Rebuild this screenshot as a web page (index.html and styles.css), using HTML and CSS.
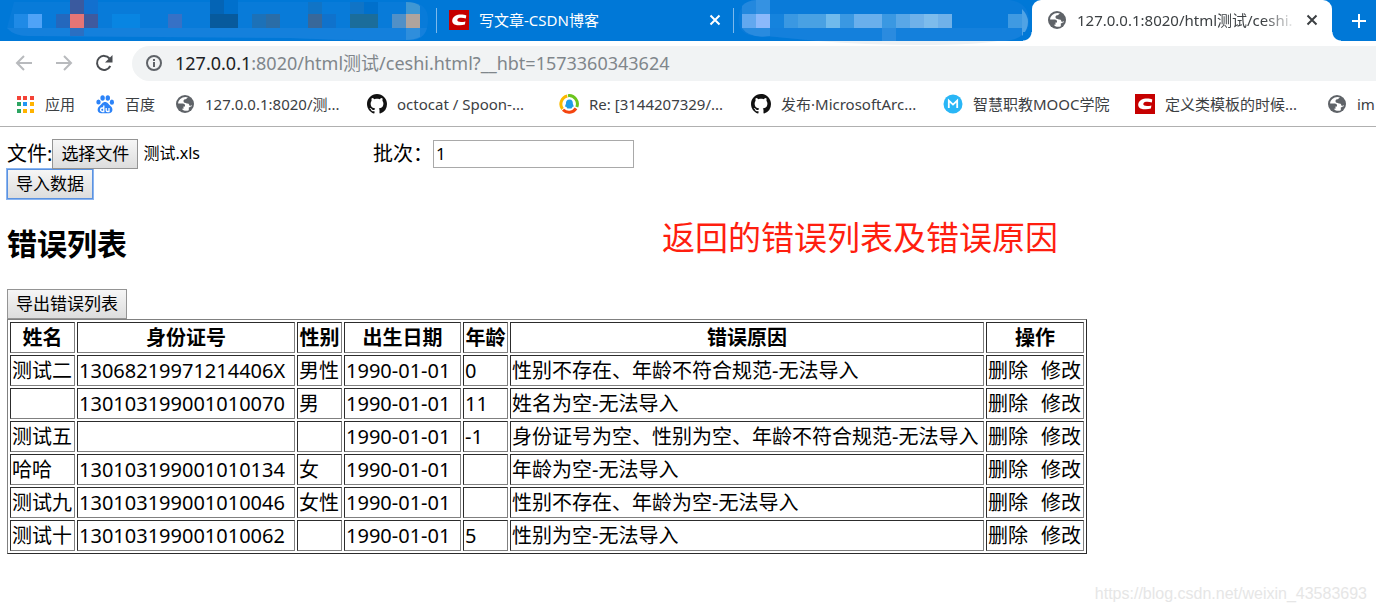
FILE: index.html
```html
<!DOCTYPE html>
<html lang="zh-CN">
<head>
<meta charset="utf-8">
<title>错误列表</title>
<link rel="stylesheet" href="styles.css">
</head>
<body>
<svg class="defs" width="0" height="0" aria-hidden="true">
  <symbol id="globe" viewBox="0 0 20 20">
    <circle cx="10" cy="10" r="9" fill="#5f6368"/>
    <path d="M10.500 3C6.500 3 3.200 6 3.100 9.500h4.700c1.300 0 2.200.9 2.200 2v1H8.500v2.200H6.800c1.800 2.300 5 2.700 7 1.500v-2.700c1-.5 1.800-1.300 2.900-1.300.5-1.500.3-3-.3-4.200h-3.200c-1.200 0-1.200 1-2.500 1-1.500 0-2.200-.9-2.200-2s.9-1.700 2.100-1.700c1 0 1-1.200 2.400-1.700z" fill="#fff"/>
    <path d="M13 4.500c2.500 1 4.500 3 4.700 6.500l-2.900 1-1.200-2.200-2.600-.6V8l2-1z" fill="#5f6368"/>
  </symbol>
  <symbol id="github" viewBox="0 0 16 16">
    <path fill="#111" d="M8 0C3.580 0 0 3.580 0 8c0 3.540 2.290 6.530 5.470 7.590.4.070.55-.17.55-.38 0-.19-.01-.82-.01-1.490-2.010.37-2.530-.49-2.690-.94-.09-.23-.48-.94-.82-1.130-.28-.15-.68-.52-.01-.53.63-.01 1.080.58 1.230.82.72 1.210 1.870.87 2.330.66.07-.52.28-.87.51-1.070-1.780-.2-3.640-.89-3.640-3.950 0-.87.31-1.590.82-2.150-.08-.2-.36-1.020.08-2.120 0 0 .67-.21 2.200.82.64-.18 1.320-.27 2-.27s1.360.09 2 .27c1.530-1.040 2.200-.82 2.200-.82.44 1.100.16 1.920.08 2.120.51.56.82 1.270.82 2.150 0 3.070-1.870 3.750-3.650 3.950.29.25.54.73.54 1.480 0 1.070-.01 1.930-.01 2.200 0 .21.15.46.55.38A8.010 8.010 0 0 0 16 8c0-4.420-3.580-8-8-8z"/>
  </symbol>
  <symbol id="csdn" viewBox="0 0 20 20">
    <path fill="#c60000" d="M0 0h20v20H0z"/>
    <path d="M17.300 5.500C14.500 4.200 9.300 4 6 6c-3.600 2.400-3.600 6.800-.5 8.400 3 1.300 7.300 1.200 10.400.2l.5-3.200c-2.300.7-5.400 1-7.200.2-1.500-.8-1-2.800.6-3.500 2-.8 4.700-.4 7 .4z" fill="#fff"/>
  </symbol>
  <symbol id="close" viewBox="0 0 12 12">
    <path d="m1.500 1.500 9 9m0-9-9 9" fill="none" stroke="currentColor" stroke-width="2"/>
  </symbol>
</svg>

<header class="browser">
  <div class="tabs">
    <div class="tab tab-first">
      <svg class="mosaic" width="436" height="41" aria-hidden="true">
        <path d="M14 2H410q18 1 18 18 0 19-18 20-60 1-120-2L28 36Q14 36 7 28z" fill="#087bd9"/>
        <path d="M7 28H427q-3 12-17 12-60 1-120-2L28 36Q14 36 7 28z" fill="#1480dc"/>
        <g>
          <path fill="#3a5a9f" d="M70 0h14v14H70z"/><path fill="#1270cf" d="M84 0h14v14H84z"/>
          <path fill="#0464b5" d="M210 0h14v14h-14z"/><path fill="#0070cc" d="M224 0h14v14h-14zM364 2h14v12h-14z"/>
          <path fill="#1074c6" d="M308 2h14v12h-14zM350 2h14v12h-14z"/><path fill="#3f97d3" d="M406 2q10 0 14 4v8h-14z"/>
          <path fill="#1f8ae6" d="M14 14h14v14H14z"/><path fill="#4fa3f7" d="M28 14h14v14H28z"/>
          <path fill="#2468bd" d="M56 14h14v14H56z"/><path fill="#e67575" d="M70 14h14v14H70z"/>
          <path fill="#3f5a9e" d="M84 14h14v14H84z"/><path fill="#0885e2" d="M112 14h28v14h-28z"/>
          <path fill="#3671c6" d="M168 14h14v14h-14z"/><path fill="#075a9d" d="M210 14h28v14h-28z"/>
          <path fill="#1c71b8" d="M252 14h14v14h-14z"/><path fill="#2a6da7" d="M266 14h14v14h-14z"/>
          <path fill="#38689a" d="M308 14h14v14h-14z"/><path fill="#0f72cc" d="M322 14h14v14h-14z"/>
          <path fill="#1b6d9b" d="M350 14h28v14h-28z"/><path fill="#5190c7" d="M392 14h14v14h-14z"/>
          <path fill="#b0a49d" d="M406 14h14v14h-14z"/><path fill="#2b6fc2" d="M70 28h14v8H70z"/>
          <path fill="#2f8edc" d="M406 28h14v9q-6 3-14 3z"/>
        </g>
      </svg>
    </div>
    <div class="tab tab-middle">
      <svg class="icon" aria-hidden="true"><use href="#csdn"/></svg>
      <span class="tab-title">写文章-CSDN博客</span>
      <button class="tab-close" aria-label="关闭标签页"><svg width="12" height="12"><use href="#close"/></svg></button>
    </div>
    <div class="tab tab-third">
      <svg class="mosaic" width="298" height="46" aria-hidden="true">
        <path d="M84 41H264q-24 4-78 4Q130 45 84 41z" fill="#eef1f4"/>
        <path d="M18 0H276q19 3 19 21 0 19-29 20H84L32 36Q8 38 5 25 2 6 18 0z" fill="#0a7bd9"/>
        <path d="M8 28H293q-5 13-27 13H84L32 36Q15 38 8 28z" fill="#1480dc"/>
        <g>
          <path fill="#2388de" d="M8 6q4-5 14-6v14H8z"/><path fill="#3592e2" d="M22 0h14v14H22z"/>
          <path fill="#62a8ef" d="M8 14h14v14H8z"/><path fill="#8bb9fb" d="M22 14h14v14H22z"/>
          <path fill="#1583dd" d="M36 14h14v14H36z"/><path fill="#3a98e2" d="M50 14h14v14H50zM106 14h14v14h-14zM148 14h14v14h-14z"/>
          <path fill="#49a1e3" d="M64 14h28v14H64z"/><path fill="#70baec" d="M92 14h14v14H92z"/>
          <path fill="#69afec" d="M120 14h28v14h-28z"/><path fill="#59a7e7" d="M162 14h14v14h-14z"/>
          <path fill="#6fb1e9" d="M176 14h42v14h-42z"/><path fill="#7dbcec" d="M190 14h14v14h-14z"/>
          <path fill="#3f9ae2" d="M274 14h14v14h-14z"/><path fill="#4fa3e5" d="M288 9q6 6 6 13t-6 14z"/>
          <path fill="#298bdf" d="M8 28h28v8q-20 3-28-8z"/><path fill="#2b8bdf" d="M148 28h14v13h-14z"/>
        </g>
      </svg>
    </div>
    <div class="tab tab-active">
      <svg class="icon" aria-hidden="true"><use href="#globe"/></svg>
      <span class="tab-title">127.0.0.1:8020/html测试/ceshi.</span>
      <button class="tab-close" aria-label="关闭标签页"><svg width="12" height="12"><use href="#close"/></svg></button>
    </div>
    <button class="new-tab" aria-label="打开新的标签页">
      <svg width="16" height="16" viewBox="0 0 16 16"><path d="M8 1v14M1 8h14" stroke="#fff" stroke-width="2"/></svg>
    </button>
  </div>

  <div class="toolbar">
    <button class="nav" aria-label="后退"><svg width="18" height="18" viewBox="0 0 18 18"><path d="M17 9H2M9 2 2 9l7 7" fill="none" stroke="#b8babd" stroke-width="2"/></svg></button>
    <button class="nav" aria-label="前进"><svg width="18" height="18" viewBox="0 0 18 18"><path d="M1 9h15M9 2l7 7-7 7" fill="none" stroke="#b8babd" stroke-width="2"/></svg></button>
    <button class="nav" aria-label="重新加载"><svg width="18" height="18" viewBox="0 0 18 18"><path d="M15.300 12A7 7 0 1 1 14.500 4.500" fill="none" stroke="#4a4d51" stroke-width="2"/><path d="M17.500 1v7.500H10z" fill="#4a4d51"/></svg></button>
    <div class="address">
      <svg width="18" height="18" viewBox="0 0 18 18" aria-hidden="true"><circle cx="9" cy="9" r="7" fill="none" stroke="#5f6368" stroke-width="2"/><path d="M9 8v5M9 5v2" stroke="#5f6368" stroke-width="2"/></svg>
      <span class="url"><span class="host">127.0.0.1</span>:8020/html测试/ceshi.html?__hbt=1573360343624</span>
    </div>
  </div>

  <nav class="bookmarks">
    <a class="bookmark short" href="#">
      <svg class="icon" viewBox="0 0 20 20"><path fill="#f44336" d="M2 2h4v4H2zM8 2h4v4H8zM15 2h4v4h-4z"/><path fill="#2da562" d="M2 8h4v4H2zM2 15h4v4H2z"/><path fill="#2196f3" d="M8 8h4v4H8z"/><path fill="#ffb300" d="M15 8h4v4h-4zM8 15h4v4H8zM15 15h4v4h-4z"/></svg>
      <span>应用</span></a>
    <a class="bookmark short" href="#">
      <svg class="icon" viewBox="0 0 20 20"><g fill="#2c83f8"><ellipse cx="3.500" cy="8" rx="2.200" ry="2.600"/><ellipse cx="7.600" cy="4" rx="2.200" ry="2.800"/><ellipse cx="12.800" cy="4" rx="2.200" ry="2.800"/><ellipse cx="16.900" cy="8.200" rx="2.100" ry="2.600"/><path d="M10 8c2.800 0 3.600 2.400 5.500 4 3.400 2.800 2 7.200-1.600 7.200H6.200c-3.600 0-5-4.400-1.600-7.200C6.700 10.400 7.300 8 10 8z"/></g><path d="M8.800 11.500v6H7.200c-2.200 0-2.200-3.500 0-3.500h1.600m2.400 0v2.300c0 1 .5 1.200 1.200 1.200H14V14" fill="none" stroke="#fff" stroke-width="1.300"/></svg>
      <span>百度</span></a>
    <a class="bookmark" href="#"><svg class="icon"><use href="#globe"/></svg><span>127.0.0.1:8020/测...</span></a>
    <a class="bookmark" href="#"><svg class="icon"><use href="#github"/></svg><span>octocat / Spoon-...</span></a>
    <a class="bookmark" href="#">
      <svg class="icon" viewBox="0 0 20 20"><g fill="none" stroke-width="3"><path d="M9 1.700A8.300 8.300 0 0 1 17.800 13" stroke="#6cc51d"/><path d="M17 14.400A8.300 8.300 0 0 1 4 15.800" stroke="#f4440f"/><path d="M3.500 15A8.300 8.300 0 0 1 8.300 2" stroke="#fbb900"/></g><path d="M10.500 5.500c2.600 0 3.500 2 3.300 4l1 3-1.100.3-1.200 1.700H8.400l-1.200-1.700-1.300-.3 1.100-3c-.2-2 .9-4 3.500-4z" fill="#1e9ce8"/></svg>
      <span>Re: [3144207329/...</span></a>
    <a class="bookmark" href="#"><svg class="icon"><use href="#github"/></svg><span>发布·MicrosoftArc...</span></a>
    <a class="bookmark" href="#">
      <svg class="icon" viewBox="0 0 20 20"><circle cx="10" cy="10" r="9.500" fill="#29b6f6"/><path d="M5.800 14V6.600l4.200 4 4.200-4V14" fill="none" stroke="#fff" stroke-width="1.800"/></svg>
      <span>智慧职教MOOC学院</span></a>
    <a class="bookmark" href="#"><svg class="icon"><use href="#csdn"/></svg><span>定义类模板的时候...</span></a>
    <a class="bookmark last" href="#"><svg class="icon"><use href="#globe"/></svg><span>im</span></a>
  </nav>
</header>

<main class="page">
  <form class="upload">
    <div class="upload-row">
      <div class="file-field">
        <span>文件:</span>
        <input class="file-input" type="file" id="file">
        <label class="btn" for="file">选择文件</label>
        <span class="file-name">测试.xls</span>
      </div>
      <label for="batch">批次：</label>
      <input class="batch" id="batch" type="text" value="1">
    </div>
    <button class="btn btn-focus" type="button">导入数据</button>
  </form>

  <h2>错误列表</h2>
  <p class="note">返回的错误列表及错误原因</p>
  <button class="btn" type="button">导出错误列表</button>

  <table>
    <colgroup><col class="c-name"><col class="c-id"><col class="c-short"><col class="c-date"><col class="c-short"><col class="c-reason"><col class="c-action"></colgroup>
    <thead>
      <tr><th>姓名</th><th>身份证号</th><th>性别</th><th>出生日期</th><th>年龄</th><th>错误原因</th><th>操作</th></tr>
    </thead>
    <tbody>
      <tr><td>测试二</td><td>13068219971214406X</td><td>男性</td><td>1990-01-01</td><td>0</td><td>性别不存在、年龄不符合规范-无法导入</td><td><div class="actions"><a href="#">删除</a><a href="#">修改</a></div></td></tr>
      <tr><td></td><td>130103199001010070</td><td>男</td><td>1990-01-01</td><td>11</td><td>姓名为空-无法导入</td><td><div class="actions"><a href="#">删除</a><a href="#">修改</a></div></td></tr>
      <tr><td>测试五</td><td></td><td></td><td>1990-01-01</td><td>-1</td><td>身份证号为空、性别为空、年龄不符合规范-无法导入</td><td><div class="actions"><a href="#">删除</a><a href="#">修改</a></div></td></tr>
      <tr><td>哈哈</td><td>130103199001010134</td><td>女</td><td>1990-01-01</td><td></td><td>年龄为空-无法导入</td><td><div class="actions"><a href="#">删除</a><a href="#">修改</a></div></td></tr>
      <tr><td>测试九</td><td>130103199001010046</td><td>女性</td><td>1990-01-01</td><td></td><td>性别不存在、年龄为空-无法导入</td><td><div class="actions"><a href="#">删除</a><a href="#">修改</a></div></td></tr>
      <tr><td>测试十</td><td>130103199001010062</td><td></td><td>1990-01-01</td><td>5</td><td>性别为空-无法导入</td><td><div class="actions"><a href="#">删除</a><a href="#">修改</a></div></td></tr>
    </tbody>
  </table>
  <div class="watermark">https://blog.csdn.net/weixin_43583693</div>
</main>
</body>
</html>
```
FILE: styles.css
```css
* { box-sizing: border-box; }

body {
  margin: 0;
  min-height: 100vh;
  display: flex;
  flex-direction: column;
  overflow-x: hidden;
  background: #fff;
  color: #000;
  font: 20px/27px "Noto Sans", "Noto Sans CJK SC", sans-serif;
}

button, input { font: inherit; }
a { color: inherit; text-decoration: none; }
svg { display: block; flex: none; }
.defs { position: absolute; }
.icon { width: 20px; height: 20px; }

/* Browser frame */
.browser {
  overflow: hidden;
  color: #3c4043;
  font-size: 15px;
  line-height: 20px;
  white-space: nowrap;
  border-bottom: 1px solid #b0b0b0;
}

.tabs {
  display: flex;
  height: 41px;
  background: #0078d7;
}

.tab {
  flex: none;
  display: flex;
  align-items: center;
  gap: 10px;
}

.mosaic { align-self: flex-start; overflow: visible; }

.tab-first { width: 436px; }

.tab-middle {
  width: 298px;
  padding: 0 13px 2px;
  color: #fff;
  background:
    linear-gradient(#7cb9ec, #7cb9ec) left center / 1px 25px no-repeat,
    linear-gradient(#7cb9ec, #7cb9ec) right center / 1px 25px no-repeat;
}

.tab-third { width: 298px; z-index: 1; }

.tab-active {
  position: relative;
  width: 300px;
  padding: 0 14px 2px 15px;
  background: #fff;
  border-radius: 9px 9px 0 0;
  z-index: 2;
}

.tab-active::before,
.tab-active::after {
  content: "";
  position: absolute;
  bottom: 0;
  width: 9px;
  height: 9px;
}
.tab-active::before { right: 100%; background: radial-gradient(circle at 0 0, #0078d7 8px, #fff 9px); }
.tab-active::after { left: 100%; background: radial-gradient(circle at 100% 0, #0078d7 8px, #fff 9px); }

.tab-title { flex: 1; }
.tab-active .tab-title {
  -webkit-mask-image: linear-gradient(to right, #000 85%, transparent);
  mask-image: linear-gradient(to right, #000 85%, transparent);
}

.tab-close, .new-tab, .nav {
  display: flex;
  align-items: center;
  justify-content: center;
  padding: 0;
  border: 0;
  background: none;
  color: inherit;
}

.new-tab { flex: 1; padding-left: 10px; }

.toolbar {
  display: flex;
  align-items: center;
  height: 44px;
  padding-left: 4px;
}

.nav { width: 40px; height: 40px; }

.address {
  flex: 1;
  display: flex;
  align-items: center;
  gap: 12px;
  height: 35px;
  margin-left: 8px;
  padding-left: 13px;
  border-radius: 18px 0 0 18px;
  background: #f1f3f4;
}

.url { color: #80868b; font-size: 18px; }
.host { color: #202124; }

.bookmarks {
  display: flex;
  align-items: center;
  height: 41px;
  padding: 0 0 4px 15px;
}

.bookmark {
  flex: none;
  display: flex;
  align-items: center;
  gap: 10px;
  width: 192px;
}
.bookmark.short { width: 80px; }
.bookmark.last { width: auto; }

/* Page */
.page {
  position: relative;
  flex: 1;
  padding: 11px 7px 0;
}

.upload-row {
  display: flex;
  align-items: center;
  min-height: 31px;
}

.file-field {
  display: flex;
  align-items: center;
  width: 366px;
}

.file-input {
  position: absolute;
  width: 1px;
  height: 1px;
  opacity: 0;
}

.file-name { margin-left: 5px; font-size: 16px; }

.btn {
  display: block;
  height: 30px;
  padding: 0 8px;
  border: 1px solid #949494;
  background: linear-gradient(#f6f6f6, #dddddd);
  color: #000;
  font-size: 17px;
  line-height: 28px;
}

.btn-focus {
  border-color: #5b92e0;
  box-shadow: 0 0 0 1px #8ab4f0;
}

.batch {
  width: 201px;
  height: 28px;
  padding: 0 2px;
  border: 1px solid #a9a9a9;
  font-size: 17px;
}

h2 {
  margin: 25px 0;
  font-size: 30px;
  line-height: 40px;
}

.note {
  position: absolute;
  top: 89px;
  left: 662px;
  margin: 0;
  color: #ff1e0f;
  font-size: 33px;
  line-height: 44px;
}

table {
  table-layout: fixed;
  width: 1080px;
  border: 1px solid;
  border-color: #808080 #2c2c2c #2c2c2c #808080;
  border-spacing: 2px;
  white-space: nowrap;
}

th, td {
  height: 31px;
  padding: 1px;
  border: 1px solid;
  border-color: #2c2c2c #808080 #808080 #2c2c2c;
  text-align: left;
}
th { text-align: center; }

.c-name { width: 65px; }
.c-id { width: 218px; }
.c-short { width: 45px; }
.c-date { width: 117px; }
.c-reason { width: 474px; }

.actions { display: flex; gap: 13px; }

.watermark {
  position: absolute;
  right: 9px;
  bottom: 8px;
  color: #e6e6e6;
  font: 16px/20px "Liberation Sans", sans-serif;
}
```
